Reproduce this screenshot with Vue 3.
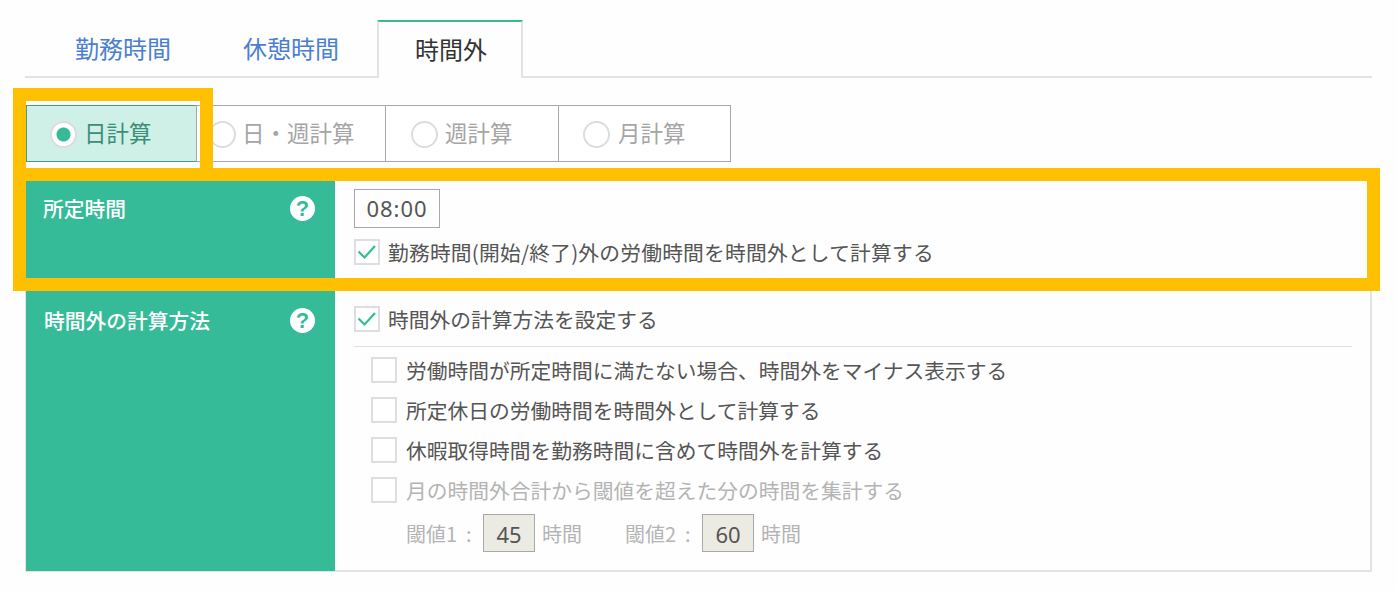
<script setup>
import { ref } from 'vue'

const tabs = ['勤務時間', '休憩時間', '時間外']
const activeTab = ref(2)

const modes = [
  { label: '日計算', width: 171 },
  { label: '日・週計算', width: 190 },
  { label: '週計算', width: 174 },
  { label: '月計算', width: 173 }
]
const activeMode = ref(0)

const options = [
  { label: '労働時間が所定時間に満たない場合、時間外をマイナス表示する' },
  { label: '所定休日の労働時間を時間外として計算する' },
  { label: '休暇取得時間を勤務時間に含めて時間外を計算する' },
  { label: '月の時間外合計から閾値を超えた分の時間を集計する', disabled: true }
]
</script>

<template>
  <div class="page">
    <ul class="tabs">
      <li
        v-for="(tab, i) in tabs"
        :key="tab"
        class="tab"
        :class="{ active: i === activeTab }"
        @click="activeTab = i"
      >{{ tab }}</li>
    </ul>

    <div class="modes">
      <label
        v-for="(mode, i) in modes"
        :key="mode.label"
        class="mode"
        :class="{ selected: i === activeMode }"
        :style="{ width: mode.width + 'px' }"
        @click="activeMode = i"
      >
        <span class="radio"></span>
        <span class="mode-text">{{ mode.label }}</span>
      </label>
    </div>

    <div class="table">
      <div class="row row-first">
        <div class="head">
          <span>所定時間</span>
          <span class="help">?</span>
        </div>
        <div class="body">
          <div class="time-input">08:00</div>
          <div class="check check-main">
            <span class="box">
              <svg width="20" height="16" viewBox="0 0 20 16" fill="none" stroke="#36bb98" stroke-width="2.2">
                <polyline points="1.5 7.5 7.5 13.5 18 2" />
              </svg>
            </span>
            <span class="wide-text">勤務時間(開始/終了)外の労働時間を時間外として計算する</span>
          </div>
        </div>
      </div>

      <div class="row">
        <div class="head head-second">
          <span>時間外の計算方法</span>
          <span class="help">?</span>
        </div>
        <div class="body body-second">
          <div class="check check-title">
            <span class="box">
              <svg width="20" height="16" viewBox="0 0 20 16" fill="none" stroke="#36bb98" stroke-width="2.2">
                <polyline points="1.5 7.5 7.5 13.5 18 2" />
              </svg>
            </span>
            <span>時間外の計算方法を設定する</span>
          </div>
          <div class="options">
            <div
              v-for="opt in options"
              :key="opt.label"
              class="check option"
              :class="{ disabled: opt.disabled }"
            >
              <span class="box"></span>
              <span>{{ opt.label }}</span>
            </div>
            <div class="thresholds">
              <span class="th-label">閾値1&nbsp;&nbsp;:</span>
              <span class="th-input">45</span>
              <span class="th-unit">時間</span>
              <span class="th-label th-second">閾値2&nbsp;&nbsp;:</span>
              <span class="th-input">60</span>
              <span class="th-unit">時間</span>
            </div>
          </div>
        </div>
      </div>
    </div>

    <div class="mark mark-mode"></div>
    <div class="mark mark-row"></div>
  </div>
</template>

<style scoped>
.page {
  position: relative;
  width: 1397px;
  height: 591px;
  box-sizing: border-box;
  padding: 20px 25px 0;
  background: #fefefe;
  overflow: hidden;
  font-family: "Noto Sans CJK JP", "Noto Sans", sans-serif;
  font-size: 20.75px;
  color: #555;
}

.tabs {
  display: flex;
  width: 1347px;
  height: 58px;
  margin: 0;
  padding: 0;
  box-sizing: border-box;
  list-style: none;
  border-bottom: 2px solid #e3e3e3;
}

.tab {
  height: 58px;
  box-sizing: border-box;
  padding: 0 36px;
  margin-right: 1px;
  line-height: 56px;
  font-size: 24px;
  color: #4a7fd0;
  cursor: pointer;
}

.tab:first-child {
  padding: 0 35px 0 50px;
}

.tab.active {
  margin-left: 1px;
  padding: 0 34px 0 36px;
  background: #fefefe;
  color: #333;
  border: 2px solid #e3e3e3;
  border-top: 2px solid #36bb98;
  border-bottom: none;
  line-height: 54px;
}

.modes {
  display: flex;
  height: 57px;
  margin: 27px 0 0 1px;
}

.mode {
  display: flex;
  align-items: center;
  gap: 7px;
  box-sizing: border-box;
  padding: 2px 0 0 23px;
  margin-right: -1px;
  background: #fff;
  border: 1px solid #a8a8a8;
  font-size: 22.5px;
  color: #a5a5a5;
  cursor: pointer;
}

.mode:nth-child(2) {
  padding-left: 12px;
  gap: 6px;
}

.mode:nth-child(3) {
  padding-left: 25px;
}

.mode:nth-child(4) {
  padding-left: 24px;
  gap: 8px;
}

.mode.selected {
  background: #cff0e7;
  border-color: #4d9a84;
  color: #3b8f78;
}

.mode-text {
  margin-top: -6px;
}

.radio {
  width: 27px;
  height: 27px;
  flex: none;
  box-sizing: border-box;
  background: #fff;
  border: 2px solid #dcdcdc;
  border-radius: 50%;
}

.mode.selected .radio {
  background: radial-gradient(circle, #36bb98 0 6.5px, #fff 7.5px);
}

.table {
  width: 1347px;
  height: 391px;
  margin-top: 19px;
  box-sizing: border-box;
  border: 2px solid #e3e3e3;
  border-top: none;
  border-left-width: 1px;
}

.row {
  display: flex;
}

.row-first {
  height: 110px;
}

.head {
  display: flex;
  justify-content: space-between;
  width: 309px;
  flex: none;
  box-sizing: border-box;
  padding: 12px 20px 0 17px;
  background: #36bb98;
  color: #fff;
  font-weight: 500;
  line-height: 30px;
}

.head-second {
  height: 280px;
  padding: 14px 20px 0 18px;
}

.help {
  width: 25px;
  height: 25px;
  margin-top: 3px;
  border-radius: 50%;
  background: #fff;
  color: #36bb98;
  font-family: "Liberation Sans", sans-serif;
  font-size: 22px;
  font-weight: 700;
  line-height: 25px;
  text-align: center;
}

.body {
  flex: 1;
  padding: 8px 18px 0 19px;
}

.body-second {
  padding-top: 0;
}

.time-input {
  width: 86px;
  height: 39px;
  box-sizing: border-box;
  border: 1px solid #a8a8a8;
  color: #555;
  font-family: "Noto Sans", sans-serif;
  font-size: 22px;
  letter-spacing: 1px;
  line-height: 37px;
  text-align: center;
}

.check {
  display: flex;
  align-items: center;
  gap: 8px;
  height: 30px;
  line-height: 30px;
}

.check-main {
  margin-top: 9px;
}

.wide-text {
  letter-spacing: 0.2px;
}

.check-title {
  height: 54px;
  padding-top: 1px;
  border-bottom: 1px solid #e0e0e0;
}

.box {
  display: flex;
  align-items: center;
  justify-content: center;
  width: 26px;
  height: 26px;
  flex: none;
  box-sizing: border-box;
  background: #fff;
  border: 2px solid #dedede;
}

.options {
  padding: 3px 0 0 17px;
}

.option {
  height: 40px;
  gap: 9px;
}

.option.disabled {
  color: #b4b4b4;
}

.thresholds {
  display: flex;
  align-items: center;
  height: 38px;
  margin-top: 4px;
  padding-left: 35px;
  color: #b4b4b4;
  font-size: 20px;
}

.th-label {
  width: 77px;
}

.th-second {
  margin-left: 43px;
}

.th-input {
  width: 52px;
  height: 38px;
  box-sizing: border-box;
  background: #ebebe4;
  border: 1px solid #a8a8a8;
  color: #555;
  font-family: "Noto Sans", sans-serif;
  font-size: 22px;
  line-height: 38px;
  text-align: center;
}

.th-unit {
  margin-left: 7px;
}

/* 注釈の枠 */
.mark {
  position: absolute;
  box-sizing: border-box;
  border: 13px solid #ffc000;
  pointer-events: none;
}

.mark-mode {
  left: 13px;
  top: 88px;
  width: 200px;
  height: 93px;
  border-bottom: none;
}

.mark-row {
  left: 13px;
  top: 168px;
  width: 1367px;
  height: 123px;
}
</style>
